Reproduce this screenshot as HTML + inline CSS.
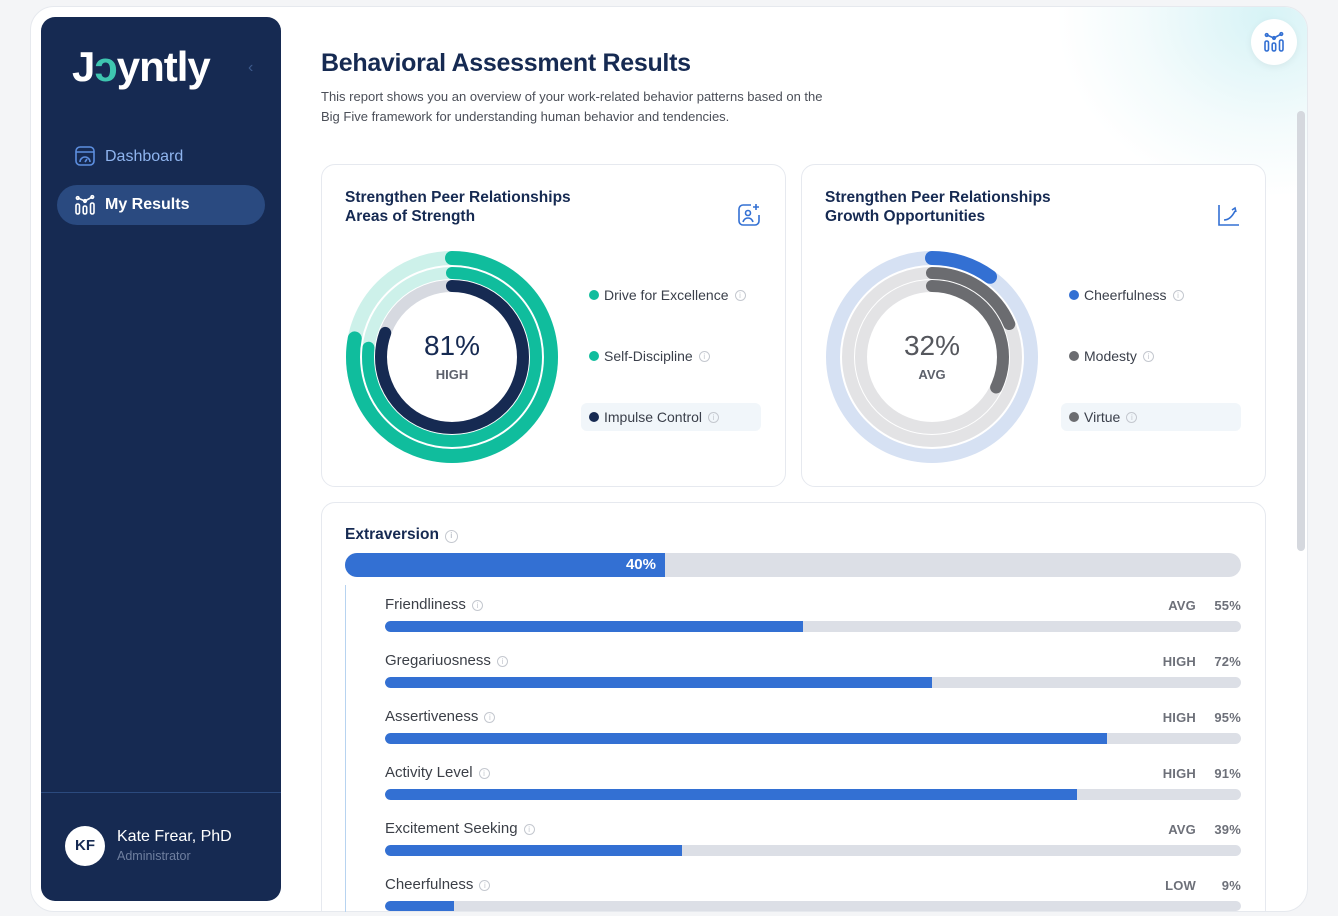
<!DOCTYPE html>
<html><head><meta charset="utf-8"><style>
*{box-sizing:border-box;margin:0;padding:0}
body{width:1338px;height:916px;background:#f4f5f7;font-family:"Liberation Sans",sans-serif;position:relative;overflow:hidden}
.frame{position:absolute;left:30px;top:6px;width:1278px;height:906px;background:#fff;border-radius:24px;overflow:hidden;border:1px solid #e6e9ee}
.glow{position:absolute;right:-170px;top:-170px;width:420px;height:360px;border-radius:50%;background:radial-gradient(closest-side,rgba(205,240,244,.8),rgba(225,245,247,.4) 60%,rgba(255,255,255,0))}
.side{position:absolute;left:10px;top:10px;width:240px;height:884px;background:#162a52;border-radius:14px}
.abs{position:absolute}
.card{position:absolute;background:#fff;border:1px solid #e6e9ef;border-radius:14px}
.ct{position:absolute;left:23px;top:23px;font-weight:bold;font-size:15.5px;color:#162a52;line-height:19px}
.leg{position:absolute;font-size:14px;color:#3a3f4a;display:flex;align-items:center;height:28px;padding-left:8px;width:180px;border-radius:6px}
.dot{width:10px;height:10px;border-radius:50%;margin-right:5px}
.i{display:inline-block;width:11px;height:11px;border:1px solid #c4c8cf;border-radius:50%;margin-left:6px;font-size:8px;line-height:9px;text-align:center;color:#c4c8cf;vertical-align:1px}
.row{position:absolute;left:385px;width:856px}
.row .lb{position:absolute;left:0;top:0;font-size:15px;color:#3b3f47}
.row .rt{position:absolute;right:0;top:2px;font-size:13px;color:#6d7079;font-weight:bold;letter-spacing:.2px}
.row .rt span{display:inline-block;width:45px;text-align:right}
.row .tr{position:absolute;left:0;top:17px;width:856px;height:11px;background:#dcdfe6;border-radius:6px;overflow:hidden}
.row .fl{height:11px;background:#3370d3;border-radius:6px 0 0 6px}
</style></head><body>
<div class="frame">
<div class="glow"></div>
<div class="side">
  <div class="abs" style="left:31px;top:26px;font-size:42px;font-weight:bold;color:#fff;letter-spacing:-1px">J<span style="color:#3ec6b0">ɔ</span>yntly</div>
  <div class="abs" style="left:207px;top:42px;color:#3d5a8c;font-size:16px">‹</div>
  <svg class="abs" style="left:33px;top:128px" width="22" height="22" viewBox="0 0 22 22" fill="none" stroke="#5d8fe0" stroke-width="1.6"><rect x="2" y="2" width="18" height="18" rx="4"/><line x1="2" y1="7" x2="20" y2="7"/><path d="M6 17a5 5 0 0 1 10 0"/><line x1="11" y1="17" x2="13" y2="14"/></svg>
  <div class="abs" style="left:64px;top:131px;font-size:16px;color:#8fb4ee">Dashboard</div>
  <div class="abs" style="left:16px;top:168px;width:208px;height:40px;background:#2a4a80;border-radius:20px"></div>
  <svg class="abs" style="left:33px;top:177px" width="22" height="22" viewBox="0 0 22 22" fill="none" stroke="#fff" stroke-width="1.6"><rect x="2" y="10" width="3.5" height="10" rx="1.7"/><rect x="9.2" y="12" width="3.5" height="8" rx="1.7"/><rect x="16.5" y="9" width="3.5" height="11" rx="1.7"/><path d="M3.7 4l7.3 3 7.3-4"/><circle cx="3.7" cy="4" r="1.3"/><circle cx="11" cy="7" r="1.3"/><circle cx="18.3" cy="3" r="1.3"/></svg>
  <div class="abs" style="left:64px;top:179px;font-size:16px;color:#fff;font-weight:bold">My Results</div>
  <div class="abs" style="left:0;top:775px;width:240px;height:1px;background:#2b4a7e"></div>
  <div class="abs" style="left:24px;top:809px;width:40px;height:40px;border-radius:50%;background:#fff;color:#162a52;font-weight:bold;font-size:15px;text-align:center;line-height:40px">KF</div>
  <div class="abs" style="left:76px;top:811px;font-size:16px;color:#fff">Kate Frear, PhD</div>
  <div class="abs" style="left:76px;top:832px;font-size:12.5px;color:#6f7f9f">Administrator</div>
</div>
<div class="abs" style="left:1220px;top:12px;width:46px;height:46px;border-radius:50%;background:#fff;box-shadow:0 2px 8px rgba(0,0,0,.06)"></div>
<svg class="abs" style="left:1232px;top:24px" width="22" height="22" viewBox="0 0 22 22" fill="none" stroke="#3370d3" stroke-width="1.6"><rect x="2" y="10" width="3.5" height="10" rx="1.7"/><rect x="9.2" y="12" width="3.5" height="8" rx="1.7"/><rect x="16.5" y="9" width="3.5" height="11" rx="1.7"/><path d="M3.7 4l7.3 3 7.3-4"/><circle cx="3.7" cy="4" r="1.3"/><circle cx="11" cy="7" r="1.3"/><circle cx="18.3" cy="3" r="1.3"/></svg>
<div class="abs" style="left:1266px;top:104px;width:8px;height:440px;background:#d5d8de;border-radius:4px"></div>

<div class="abs" style="left:290px;top:42px;font-size:25px;font-weight:bold;color:#162a52;letter-spacing:-.3px">Behavioral Assessment Results</div>
<div class="abs" style="left:290px;top:80px;font-size:13px;color:#4b4f58;line-height:19.5px;width:600px">This report shows you an overview of your work-related behavior patterns based on the<br>Big Five framework for understanding human behavior and tendencies.</div>

<div class="card" style="left:290px;top:157px;width:465px;height:323px">
  <div class="ct">Strengthen Peer Relationships<br>Areas of Strength</div>
  <svg class="abs" style="left:415px;top:38px" width="24" height="24" viewBox="0 0 24 24" fill="none" stroke="#3370d3" stroke-width="1.6"><path d="M14 2H6a4 4 0 0 0-4 4v12a4 4 0 0 0 4 4h12a4 4 0 0 0 4-4v-6"/><circle cx="11" cy="10" r="2.5"/><path d="M6 19c1-3 3-4 5-4s4 1 5 4"/><path d="M19 1v6M16 4h6"/></svg>
  <svg class="abs" style="left:23px;top:85px" width="214" height="214" viewBox="-107 -107 214 214">
   <g transform="rotate(-90)" fill="none" stroke-linecap="round">
    <circle r="99" stroke="#cdf1ea" stroke-width="14"/>
    <circle r="99" stroke="#10bd9d" stroke-width="14" stroke-dasharray="485 1000"/>
    <circle r="85" stroke="#fff" stroke-width="2" />
    <circle r="84" stroke="#cdf1ea" stroke-width="12"/>
    <circle r="84" stroke="#10bd9d" stroke-width="12" stroke-dasharray="405 1000"/>
    <circle r="71" stroke="#d6d9e0" stroke-width="12"/>
    <circle r="71" stroke="#162a52" stroke-width="12" stroke-dasharray="359 1000"/>
   </g>
   <text x="0" y="-2" text-anchor="middle" font-size="28" fill="#162a52" font-family="Liberation Sans">81%</text>
   <text x="0" y="22" text-anchor="middle" font-size="13" fill="#5d616b" font-weight="bold" font-family="Liberation Sans">HIGH</text>
  </svg>
  <div class="leg" style="left:259px;top:116px"><div class="dot" style="background:#10bd9d"></div>Drive for Excellence<span class="i">i</span></div>
  <div class="leg" style="left:259px;top:177px"><div class="dot" style="background:#10bd9d"></div>Self-Discipline<span class="i">i</span></div>
  <div class="leg" style="left:259px;top:238px;background:#f1f6fa"><div class="dot" style="background:#162a52"></div>Impulse Control<span class="i">i</span></div>
</div>

<div class="card" style="left:770px;top:157px;width:465px;height:323px">
  <div class="ct">Strengthen Peer Relationships<br>Growth Opportunities</div>
  <svg class="abs" style="left:415px;top:38px" width="24" height="24" viewBox="0 0 24 24" fill="none" stroke="#3370d3" stroke-width="1.6"><path d="M2 2v20h20"/><path d="M7 17c4 0 8-3 11-9"/><path d="M15 7l3-2 1 4"/></svg>
  <svg class="abs" style="left:23px;top:85px" width="214" height="214" viewBox="-107 -107 214 214">
   <g transform="rotate(-90)" fill="none" stroke-linecap="round">
    <circle r="99" stroke="#d6e1f3" stroke-width="14"/>
    <circle r="99" stroke="#3370d3" stroke-width="14" stroke-dasharray="62 1000"/>
    <circle r="85" stroke="#fff" stroke-width="2"/>
    <circle r="84" stroke="#e3e3e5" stroke-width="12"/>
    <circle r="84" stroke="#6b6c70" stroke-width="12" stroke-dasharray="98 1000"/>
    <circle r="71" stroke="#e3e3e5" stroke-width="12"/>
    <circle r="71" stroke="#6b6c70" stroke-width="12" stroke-dasharray="143 1000"/>
   </g>
   <text x="0" y="-2" text-anchor="middle" font-size="28" fill="#55575d" font-family="Liberation Sans">32%</text>
   <text x="0" y="22" text-anchor="middle" font-size="13" fill="#5d616b" font-weight="bold" font-family="Liberation Sans">AVG</text>
  </svg>
  <div class="leg" style="left:259px;top:116px"><div class="dot" style="background:#3370d3"></div>Cheerfulness<span class="i">i</span></div>
  <div class="leg" style="left:259px;top:177px"><div class="dot" style="background:#6b6c70"></div>Modesty<span class="i">i</span></div>
  <div class="leg" style="left:259px;top:238px;background:#f1f6fa"><div class="dot" style="background:#6b6c70"></div>Virtue<span class="i">i</span></div>
</div>

<div class="card" style="left:290px;top:495px;width:945px;height:440px"></div>
</div>
<div class="abs" style="left:345px;top:526px;font-size:15.5px;font-weight:bold;color:#162a52">Extraversion<span class="i" style="width:13px;height:13px">i</span></div>
<div class="abs" style="left:345px;top:553px;width:896px;height:24px;background:#dcdfe6;border-radius:12px;overflow:hidden"><div style="width:320px;height:24px;background:#3370d3;color:#fff;font-weight:bold;font-size:15px;text-align:right;padding-right:9px;line-height:24px">40%</div></div>
<div class="abs" style="left:345px;top:585px;width:1px;height:331px;background:#b7d3f0"></div>
<div class="row" style="top:596px"><div class="lb">Friendliness<span class="i">i</span></div><div class="rt">AVG<span>55%</span></div><div class="tr" style="top:25px"><div class="fl" style="width:418px"></div></div></div>
<div class="row" style="top:652px"><div class="lb">Gregariuosness<span class="i">i</span></div><div class="rt">HIGH<span>72%</span></div><div class="tr" style="top:25px"><div class="fl" style="width:547px"></div></div></div>
<div class="row" style="top:708px"><div class="lb">Assertiveness<span class="i">i</span></div><div class="rt">HIGH<span>95%</span></div><div class="tr" style="top:25px"><div class="fl" style="width:722px"></div></div></div>
<div class="row" style="top:764px"><div class="lb">Activity Level<span class="i">i</span></div><div class="rt">HIGH<span>91%</span></div><div class="tr" style="top:25px"><div class="fl" style="width:692px"></div></div></div>
<div class="row" style="top:820px"><div class="lb">Excitement Seeking<span class="i">i</span></div><div class="rt">AVG<span>39%</span></div><div class="tr" style="top:25px"><div class="fl" style="width:297px"></div></div></div>
<div class="row" style="top:876px"><div class="lb">Cheerfulness<span class="i">i</span></div><div class="rt">LOW<span>9%</span></div><div class="tr" style="top:25px;height:10px"><div class="fl" style="width:69px"></div></div></div>
<div class="abs" style="left:0;top:912px;width:1338px;height:4px;background:#f4f5f7"></div>
</body></html>
